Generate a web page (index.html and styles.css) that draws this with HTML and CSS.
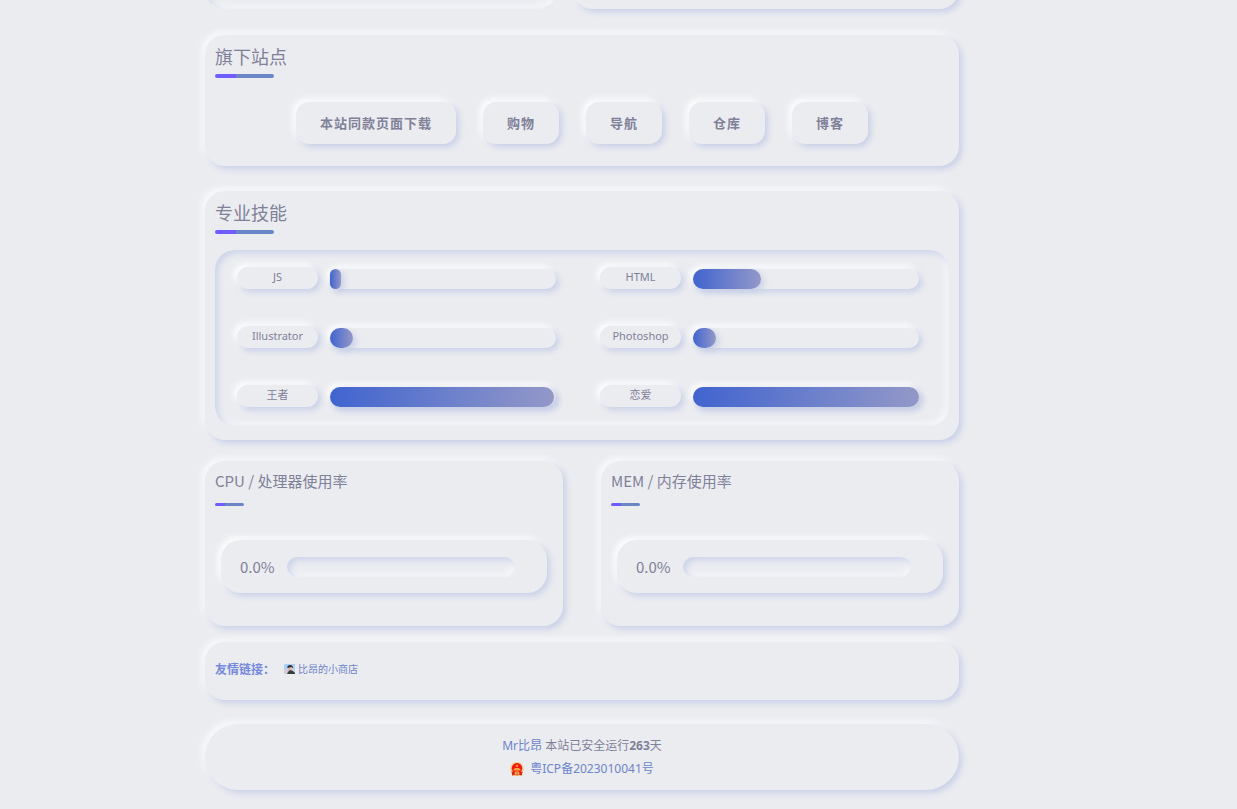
FILE: index.html
```html
<!DOCTYPE html>
<html lang="zh-CN">
<head>
<meta charset="utf-8">
<title>Mr比昂</title>
<meta name="viewport" content="width=device-width, initial-scale=1">
<link rel="stylesheet" href="styles.css">
</head>
<body>
<main class="page">
  <div class="intro">
    <div class="intro-inset"></div>
    <div class="intro-card"></div>
  </div>

  <section class="card sites">
    <h2 class="title">旗下站点</h2>
    <nav class="site-list">
      <button class="site" type="button">本站同款页面下载</button>
      <button class="site" type="button">购物</button>
      <button class="site" type="button">导航</button>
      <button class="site" type="button">仓库</button>
      <button class="site" type="button">博客</button>
    </nav>
  </section>

  <section class="card skills">
    <h2 class="title">专业技能</h2>
    <div class="skill-grid">
      <div class="skill"><span class="skill-name" id="s1">JS</span><div class="bar" role="progressbar" aria-labelledby="s1" aria-valuenow="5"><div class="fill" style="width:5%"></div></div></div>
      <div class="skill"><span class="skill-name" id="s2">HTML</span><div class="bar" role="progressbar" aria-labelledby="s2" aria-valuenow="30"><div class="fill" style="width:30%"></div></div></div>
      <div class="skill"><span class="skill-name" id="s3">Illustrator</span><div class="bar" role="progressbar" aria-labelledby="s3" aria-valuenow="10"><div class="fill" style="width:10%"></div></div></div>
      <div class="skill"><span class="skill-name" id="s4">Photoshop</span><div class="bar" role="progressbar" aria-labelledby="s4" aria-valuenow="10"><div class="fill" style="width:10%"></div></div></div>
      <div class="skill"><span class="skill-name" id="s5">王者</span><div class="bar" role="progressbar" aria-labelledby="s5" aria-valuenow="99"><div class="fill" style="width:99%"></div></div></div>
      <div class="skill"><span class="skill-name" id="s6">恋爱</span><div class="bar" role="progressbar" aria-labelledby="s6" aria-valuenow="100"><div class="fill" style="width:100%"></div></div></div>
    </div>
  </section>

  <div class="usage-row">
    <section class="card usage">
      <h2 class="title title-small" id="cpu">CPU / 处理器使用率</h2>
      <div class="meter"><span class="meter-value">0.0%</span><div class="track" role="progressbar" aria-labelledby="cpu" aria-valuenow="0"></div></div>
    </section>
    <section class="card usage">
      <h2 class="title title-small" id="mem">MEM / 内存使用率</h2>
      <div class="meter"><span class="meter-value">0.0%</span><div class="track" role="progressbar" aria-labelledby="mem" aria-valuenow="0"></div></div>
    </section>
  </div>

  <section class="card links">
    <strong class="links-title">友情链接：</strong>
    <a class="friend" href="#">
      <svg class="avatar" viewBox="0 0 11 10" aria-hidden="true">
        <path fill="#a9d0f5" d="M0 0h11v10H0z"/>
        <path fill="#d5c9d9" d="M0 5h4v5H0z"/>
        <path fill="#c6d0e0" d="M8 5h3v3H8z"/>
        <path fill="#dcb8ac" d="M4 3h4v4H4z"/>
        <path fill="#2b3138" d="M3 3q1-2 3-2 3 0 3 3l-2-1-3 1z"/>
        <path fill="#343f3d" d="M3 10l1-2 2-2 3 1 2 2v1z"/>
      </svg>
      比昂的小商店
    </a>
  </section>

  <footer class="card footer">
    <p class="line"><a href="#">Mr比昂</a> 本站已安全运行<b>263</b>天</p>
    <p class="line record">
      <svg class="emblem" viewBox="0 0 14 14" aria-hidden="true">
        <path fill="#e8cd8c" d="M7 0a6.600 6.600 0 0 1 5.500 10.300L12 14H2l-.5-3.700A6.600 6.600 0 0 1 7 0z"/>
        <circle cx="7" cy="6.2" r="5.200" fill="#f0180f"/>
        <path fill="#f6a53c" d="M7 2l.5 1.200h1.200l-1 .8.4 1.200L7 4.500l-1.100.7.4-1.200-1-.8h1.200zM3.500 7.500 5 6h4l1.500 1.500v1h-7z"/>
        <path fill="#e31b13" d="M1.500 9.500 4 10h6l2.500-.5-.8 4L9 12.500 7 13.500l-2-1-2.700 1z"/>
        <ellipse cx="7" cy="11" rx="2.600" ry="1.700" fill="#f2b04c"/>
        <circle cx="7" cy="11" r=".7" fill="#d8341c"/>
      </svg>
      <a href="#">粤ICP备2023010041号</a>
    </p>
  </footer>
</main>
</body>
</html>
```
FILE: styles.css
```css
:root {
  --bg: #ebecf0;
  --text: #7f8198;
  --link: #6b84ca;
  --raised: 3px 3px 6px #c8d0e7, -3px -3px 6px #ffffff;
  --raised-soft: 3px 3px 6px #c8d0e7, -3px -3px 6px #fafbfd;
  --sunken: inset 3px 3px 6px #ccd4e9, inset -3px -3px 6px #f7f8fb;
}

* { box-sizing: border-box; }

body {
  margin: 0;
  background: var(--bg);
  color: var(--text);
  font: 12px/23px "Noto Sans", "Noto Sans CJK SC", sans-serif;
}

a { color: var(--link); text-decoration: none; }

.page {
  display: flex;
  flex-direction: column;
  padding: 0 278px 19px 205px;
}

.intro {
  display: grid;
  grid-template-columns: 352fr 386fr;
  gap: 16px;
  margin: -51px 0 26px;
}
.intro-inset, .intro-card { min-height: 60px; border-radius: 20px; }
.intro-inset { box-shadow: var(--sunken); }
.intro-card { box-shadow: var(--raised); }

.card {
  padding: 10px;
  border-radius: 20px;
  background: var(--bg);
  box-shadow: var(--raised-soft);
}

.title {
  margin: 0;
  font-size: 18px;
  font-weight: 400;
  line-height: 24px;
}
.title::after {
  content: "";
  display: block;
  width: 59px;
  height: 4px;
  margin-top: 5px;
  border-radius: 2px;
  background: linear-gradient(90deg, #6e5cff 36%, #6b86c4 36%);
}
.title-small {
  font-family: "Noto Sans CJK SC", sans-serif;
  font-size: 15px;
  line-height: 20px;
}
.title-small::after { width: 29px; height: 3px; margin-top: 12px; }

.sites { padding-bottom: 22px; }
.site-list {
  display: flex;
  flex-wrap: wrap;
  justify-content: center;
  gap: 27px;
  margin-top: 24px;
}
.site {
  height: 42px;
  padding: 0 24px;
  border: 0;
  border-radius: 13px;
  background: var(--bg);
  box-shadow: var(--raised);
  color: var(--text);
  font: inherit;
  font-size: 13px;
  font-weight: 700;
  letter-spacing: 1px;
  cursor: pointer;
}

.skills { margin-top: 25px; padding-bottom: 14px; }
.skill-grid {
  display: grid;
  grid-template-columns: 1fr 1fr;
  gap: 37px 44px;
  margin-top: 16px;
  padding: 17px 30px 19px 22px;
  border-radius: 20px;
  box-shadow: var(--sunken);
}
.skill { display: flex; align-items: flex-end; gap: 12px; }
.skill-name {
  width: 81px;
  height: 22px;
  border-radius: 11px;
  box-shadow: var(--raised);
  font-size: 11px;
  line-height: 20px;
  text-align: center;
}
.bar {
  flex: 1;
  height: 20px;
  border-radius: 10px;
  box-shadow: var(--raised);
}
.fill {
  height: 100%;
  border-radius: 10px;
  background: linear-gradient(90deg, #4064cf, #9398c8);
  box-shadow: 3px 3px 6px #c8d0e7;
}

.usage-row {
  display: grid;
  grid-template-columns: 1fr 1fr;
  gap: 38px;
  margin-top: 21px;
}
.usage { padding-bottom: 33px; }
.meter {
  display: flex;
  align-items: center;
  gap: 12px;
  height: 53px;
  margin: 34px 6px 0;
  padding: 0 32px 0 19px;
  border-radius: 20px;
  box-shadow: var(--raised);
}
.meter-value { font-family: "Noto Sans CJK SC", sans-serif; font-size: 15px; }
.track {
  flex: 1;
  height: 20px;
  border-radius: 10px;
  box-shadow: var(--sunken);
}

.links {
  display: flex;
  align-items: center;
  min-height: 58px;
  margin-top: 16px;
  padding-bottom: 14px;
}
.links-title { color: #7489db; font-weight: 700; }
.friend {
  display: flex;
  align-items: center;
  gap: 3px;
  margin-left: 9px;
  font-size: 10px;
}
.avatar { width: 11px; height: 10px; }

.footer {
  margin-top: 24px;
  border-radius: 33px;
  text-align: center;
}
.line { margin: 0; }
.record {
  display: flex;
  align-items: center;
  justify-content: center;
  gap: 6px;
}
.emblem { width: 14px; height: 14px; }
```
